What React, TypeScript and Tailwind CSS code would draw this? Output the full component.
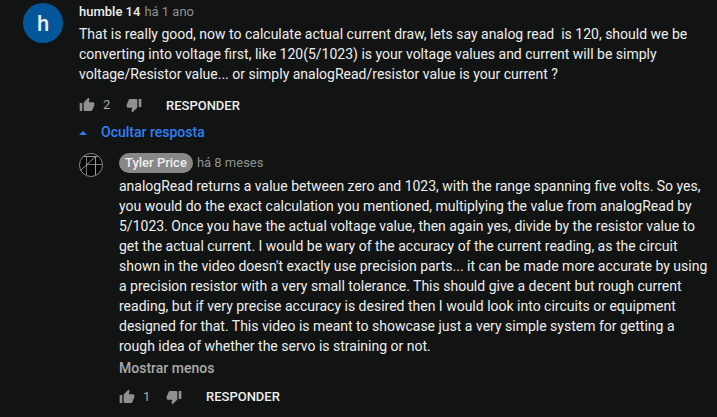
type ActionsProps = { likes: number; labelClass?: string };

function ThumbUp() {
  return (
    <svg viewBox="0 0 24 24" className="h-4 w-4 fill-[#909090]">
      <path d="M1 21h4V9H1v12zm22-11c0-1.1-.9-2-2-2h-6.31l.95-4.57.03-.32c0-.41-.17-.79-.44-1.06L14.17 1 7.59 7.59C7.22 7.95 7 8.45 7 9v10c0 1.1.9 2 2 2h9c.83 0 1.54-.5 1.84-1.22l3.02-7.05c.09-.23.14-.47.14-.73v-1.91l-.01-.01L23 10z" />
    </svg>
  );
}

function ThumbDown() {
  return (
    <svg viewBox="0 0 24 24" className="h-4 w-4 fill-[#909090]">
      <path d="M15 3H6c-.83 0-1.54.5-1.84 1.22l-3.02 7.05c-.09.23-.14.47-.14.73v1.91l.01.01L1 14c0 1.1.9 2 2 2h6.31l-.95 4.57-.03.32c0 .41.17.79.44 1.06L9.83 23l6.59-6.59c.36-.36.58-.86.58-1.41V5c0-1.1-.9-2-2-2zm4 0v12h4V3h-4z" />
    </svg>
  );
}

function Actions({ likes, labelClass = "" }: ActionsProps) {
  return (
    <div className="flex h-5 items-center text-[13px]">
      <ThumbUp />
      <span className="ml-2 w-[23px] text-[#aaa]">{likes}</span>
      <ThumbDown />
      <button className={`ml-6 font-medium text-[#eee] ${labelClass}`}>RESPONDER</button>
    </div>
  );
}

const question = [
  "That is really good, now to calculate actual current draw, lets say analog read  is 120, should we be",
  "converting into voltage first, like 120(5/1023) is your voltage values and current will be simply",
  "voltage/Resistor value... or simply analogRead/resistor value is your current ?",
];

const answer = [
  "analogRead returns a value between zero and 1023, with the range spanning five volts. So yes,",
  "you would do the exact calculation you mentioned, multiplying the value from analogRead by",
  "5/1023. Once you have the actual voltage value, then again yes, divide by the resistor value to",
  "get the actual current. I would be wary of the accuracy of the current reading, as the circuit",
  "shown in the video doesn't exactly use precision parts... it can be made more accurate by using",
  "a precision resistor with a very small tolerance. This should give a decent but rough current",
  "reading, but if very precise accuracy is desired then I would look into circuits or equipment",
  "designed for that. This video is meant to showcase just a very simple system for getting a",
  "rough idea of whether the servo is straining or not.",
];

function Lines({ lines }: { lines: string[] }) {
  return (
    <div className="text-sm leading-5 whitespace-pre text-[#eee]">
      {lines.map((line) => (
        <p key={line}>{line}</p>
      ))}
    </div>
  );
}

export default function App() {
  return (
    <main className="h-[417px] w-[717px] overflow-hidden bg-[#121413] pt-[3px] pl-[23px] font-['Roboto',sans-serif]">
      <article className="flex items-start gap-4">
        <div className="flex h-10 w-10 shrink-0 items-center justify-center rounded-full bg-[#02579b] pt-0.5 text-[22px] leading-none font-medium text-[#eee]">
          h
        </div>
        <div>
          <header className="flex h-[21px] gap-1 text-[13px] leading-[18px]">
            <span className="font-medium text-[#eee]">humble 14</span>
            <span className="text-[#909090]">há 1 ano</span>
          </header>
          <Lines lines={question} />
          <div className="mt-[11px]">
            <Actions likes={2} labelClass="pt-0.5" />
          </div>
          <button className="mt-[7px] flex h-5 items-center text-sm font-medium text-[#3080f4]">
            <svg viewBox="0 0 8 4" className="mt-px mr-[14px] h-1 w-2 fill-current">
              <path d="M0 4 4 0l4 4z" />
            </svg>
            Ocultar resposta
          </button>
          <article className="mt-[11px] flex items-start gap-4">
            <svg viewBox="0 0 24 24" className="h-6 w-6 shrink-0" fill="none">
              <circle cx="12" cy="12" r="11.5" fill="#000" stroke="#999" strokeWidth="0.9" />
              <path d="M7.5 3.5v18.5M7.5 11.5h15.5" stroke="#777" strokeWidth="1" />
              <path d="M5 3.5h13.5M16.5 3.5v18.5M1.5 17.5 16.5 3.5" stroke="#aaa" strokeWidth="0.9" />
            </svg>
            <div>
              <header className="flex h-[23px] items-start gap-1 text-[13px] leading-5">
                <span className="h-5 rounded-full bg-[#888] px-1.5 font-medium text-[#eee]">Tyler Price</span>
                <span className="text-[#909090]">há 8 meses</span>
              </header>
              <Lines lines={answer} />
              <button className="mt-[2px] block text-sm leading-5 font-medium text-[#aaa]">Mostrar menos</button>
              <div className="mt-[9px]">
                <Actions likes={1} />
              </div>
            </div>
          </article>
        </div>
      </article>
    </main>
  );
}
